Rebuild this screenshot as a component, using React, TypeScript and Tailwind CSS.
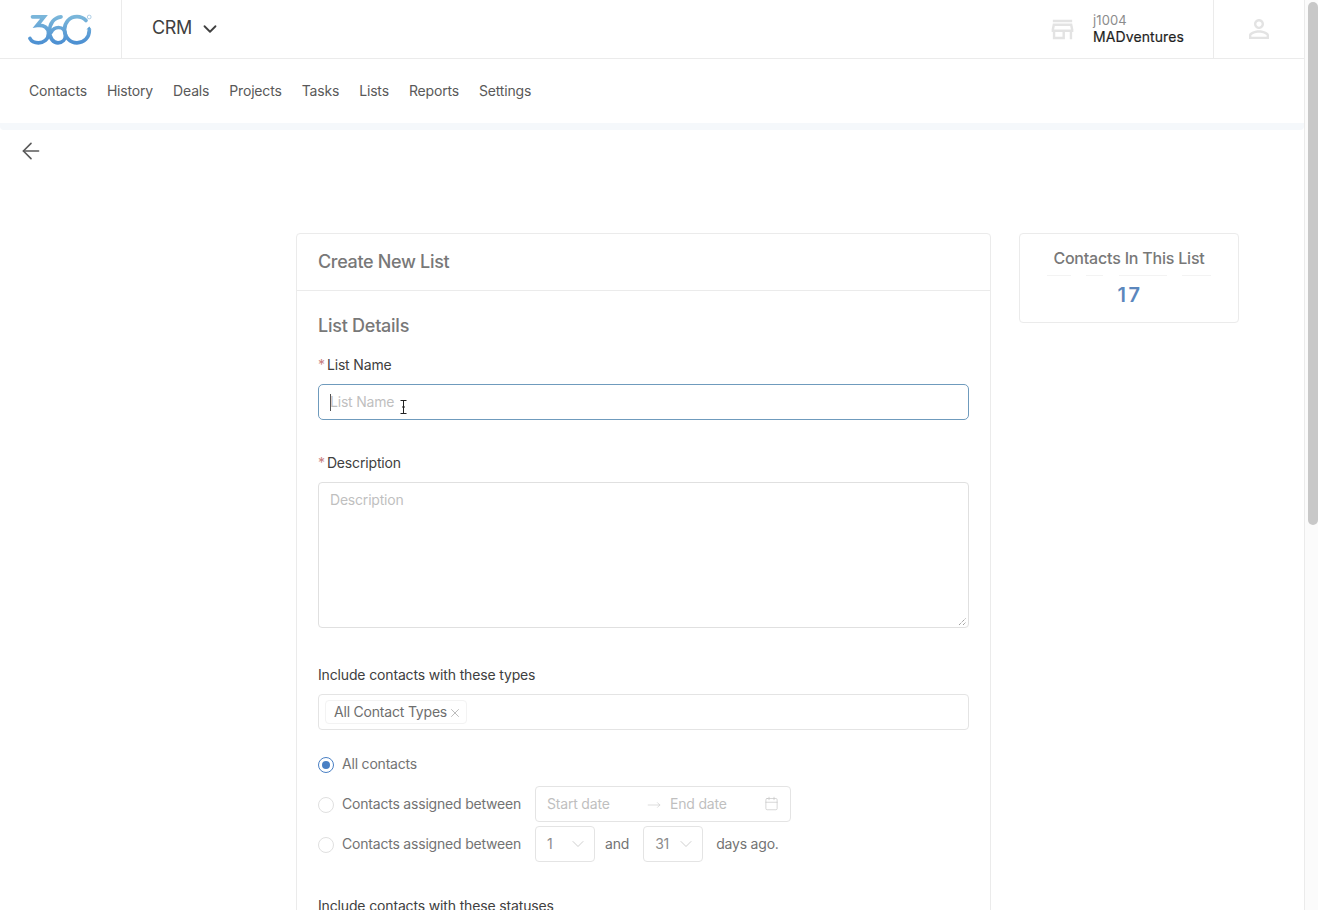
import React from "react";
import { ArrowLeft, ChevronDown, Calendar, X, MoveRight } from "lucide-react";

const navItems = ["Contacts", "History", "Deals", "Projects", "Tasks", "Lists", "Reports", "Settings"];

function Logo() {
  return (
    <svg width="64" height="31" viewBox="0 0 64 31" fill="none">
      <defs>
        <linearGradient id="g" x1="0" y1="0" x2="0" y2="1">
          <stop offset="0" stopColor="#7ab6da" />
          <stop offset="1" stopColor="#4d90d2" />
        </linearGradient>
      </defs>
      <g stroke="url(#g)" strokeWidth="3.7" strokeLinecap="round" fill="none">
        <path d="M4.5 2.8 H16 L9 11.5 C16 10.5 20.5 14 20.5 19.5 C20.5 25.5 15.5 28.8 10.5 28.8 C6.5 28.8 3.5 27.5 2 24.5" />
        <path d="M33 2.8 C26 3.5 21.5 9.5 21.5 17.5 C21.5 24.5 25.5 28.8 30 28.8 C34.5 28.8 37.5 25.5 37.5 21 C37.5 16.5 34.5 13.5 30.5 13.5 C27 13.5 24.5 15.5 23 18.5" />
        <path d="M58 6.5 C55.5 3.8 52.5 2.6 49 2.6 C41.5 2.6 36.5 8.5 36.5 15.5 C36.5 23 42 28.8 49 28.8 C56 28.8 61.3 23.5 61.3 16.5" />
      </g>
      <path d="M58.5 15.5 L61.3 12.5 L63.5 15.5 Z" fill="#5b9fd4" />
      <circle cx="61.2" cy="3" r="1.9" stroke="#8fbcdc" strokeWidth="0.7" />
    </svg>
  );
}

function StoreIcon() {
  return (
    <svg width="29" height="29" viewBox="0 0 24 24" fill="#e3e3e3">
      <path d="M18.36 9l.6 3H5.04l.6-3h12.72M20 4H4v2h16V4zm0 3H4l-1 5v2h1v6h10v-6h4v6h2v-6h1v-2l-1-5zM6 18v-4h6v4H6z" />
    </svg>
  );
}

function UserIcon() {
  return (
    <svg width="30" height="30" viewBox="0 0 24 24" fill="#e3e3e3">
      <path d="M12 5.9c1.16 0 2.1.94 2.1 2.1s-.94 2.1-2.1 2.1S9.9 9.16 9.9 8s.94-2.1 2.1-2.1m0 9c2.97 0 6.1 1.46 6.1 2.1v1.1H5.9V17c0-.64 3.13-2.1 6.1-2.1M12 4C9.79 4 8 5.79 8 8s1.79 4 4 4 4-1.79 4-4-1.79-4-4-4zm0 9c-2.67 0-8 1.34-8 4v3h16v-3c0-2.66-5.33-4-8-4z" />
    </svg>
  );
}

function Label({ children, required }: { children: React.ReactNode; required?: boolean }) {
  return (
    <div className="text-[14px] leading-[22px] tracking-[-0.15px] text-[#404040]">
      {required && <span className="mr-[2px] text-[#c98080]">*</span>}
      {children}
    </div>
  );
}

function Radio({ checked }: { checked?: boolean }) {
  return (
    <span
      className={`flex h-4 w-4 shrink-0 items-center justify-center rounded-full border bg-white ${
        checked ? "border-[#4a80c4]" : "border-[#e0e0e0]"
      }`}
    >
      {checked && <span className="h-2 w-2 rounded-full bg-[#4a80c4]" />}
    </span>
  );
}

function MiniSelect({ value }: { value: string }) {
  return (
    <div className="flex h-9 w-[60px] items-center justify-between rounded-[4px] border border-[#e4e4e4] pb-[1px] pl-[11px] pr-[6px] text-[14px] text-[#8c8c8c]">
      <span>{value}</span>
      <ChevronDown size={20} strokeWidth={0.9} className="text-[#bfbfbf]" />
    </div>
  );
}

export default function App() {
  return (
    <div className="flex h-[910px] w-[1318px] overflow-hidden bg-white font-['Inter',sans-serif]">
      <div className="h-full w-[1305px] shrink-0 border-r border-[#ebebeb]">
        <header className="flex h-[59px] items-center border-b border-[#ebebeb]">
          <div className="flex h-full w-[122px] shrink-0 items-center border-r border-[#ebebeb] pl-[28px]">
            <Logo />
          </div>
          <div className="ml-[30px] flex items-center pb-[3px] text-[18px] tracking-[-0.4px] text-[#404040]">
            CRM
            <ChevronDown size={22} strokeWidth={2} className="ml-[7px] mt-[3px]" />
          </div>
          <div className="ml-auto flex h-full items-center">
            <StoreIcon />
            <div className="ml-[16px] mr-[29px]">
              <div className="text-[13px] leading-[15px] tracking-[0.1px] text-[#8c8c8c]">j1004</div>
              <div className="text-[14px] font-normal leading-[17px] tracking-[0.1px] text-[#1f1f1f] [-webkit-text-stroke:0.2px_#1f1f1f]">MADventures</div>
            </div>
            <div className="flex h-full w-[91px] items-center justify-center border-l border-[#ebebeb]">
              <UserIcon />
            </div>
          </div>
        </header>
        <nav className="flex h-[64px] items-center gap-[20px] pb-[2px] pl-[29px] text-[14px] tracking-[-0.17px] text-[#595959]">
          {navItems.map((n) => (
            <span key={n}>{n}</span>
          ))}
        </nav>
        <div className="h-[7px] rounded-b-[4px] bg-[#f5f8fb]" />
        <div className="h-[103px] pl-[18px] pt-[8px]">
          <ArrowLeft size={26} strokeWidth={1.5} className="text-[#595959]" />
        </div>
        <div className="ml-[296px] flex items-start gap-[28px]">
          <section className="w-[695px] shrink-0 rounded-t-[4px] border border-[#ebebeb]">
            <div className="flex h-[57px] items-center border-b border-[#ebebeb] pb-[2px] pl-[21px] text-[18px] font-medium tracking-[-0.33px] text-[#787878]">
              Create New List
            </div>
            <div className="px-[21px] pt-[23px]">
              <div className="text-[18px] font-medium leading-[24px] tracking-[-0.25px] text-[#787878]">List Details</div>
              <div className="mt-[16px]">
                <Label required>List Name</Label>
              </div>
              <div className="relative mt-[8px] flex h-9 items-center rounded-[5px] border border-[#6f9bbd] pb-[1px] pl-[11px] text-[14px] tracking-[-0.2px] text-[#bfbfbf]">
                <span className="absolute left-[11px] top-[9px] h-[17px] w-px bg-[#555]" />
                List Name
                <svg className="absolute left-[81px] top-[15px]" width="7" height="14" viewBox="0 0 7 14" stroke="#222" strokeWidth="1" fill="none">
                  <path d="M0.5 0.5 H6.5 M3.5 0.5 V13.5 M0.5 13.5 H6.5 M2 7 H5" />
                </svg>
              </div>
              <div className="mt-[32px]">
                <Label required>Description</Label>
              </div>
              <div className="relative mt-[8px] h-[146px] rounded-[4px] border border-[#e0e0e0] px-[11px] pt-[6px] text-[14px] leading-[22px] tracking-[-0.2px] text-[#bfbfbf]">
                Description
                <svg className="absolute bottom-px right-px" width="9" height="9" viewBox="0 0 9 9" stroke="#777" strokeWidth="1" strokeDasharray="1 1">
                  <path d="M1 8 L8 1 M5 8 L8 5" />
                </svg>
              </div>
              <div className="mt-[36px]">
                <Label>Include contacts with these types</Label>
              </div>
              <div className="mt-[8px] flex h-9 items-center rounded-[4px] border border-[#e4e4e4] pl-[6px]">
                <div className="flex h-6 items-center rounded-[4px] border border-[#f3f3f3] pb-[1px] pl-[8px] pr-[4px] text-[14px] tracking-[-0.2px] text-[#6e6e6e]">
                  All Contact Types
                  <X size={14} strokeWidth={1} className="ml-[1px] mt-[2px] text-[#8c8c8c]" />
                </div>
              </div>
              <div className="mt-[23px] flex h-[22px] items-center gap-[8px] text-[14px] tracking-[-0.2px] text-[#737373]">
                <span className="mt-[2px]"><Radio checked /></span>
                <span className="mb-[2px]">All contacts</span>
              </div>
              <div className="mt-[11px] flex h-9 items-center gap-[8px] text-[14px] tracking-[-0.2px] text-[#737373]">
                <span className="mt-[2px]"><Radio /></span>
                <span className="mb-[2px]">Contacts assigned between</span>
                <div className="ml-[6px] flex h-9 w-[256px] items-center rounded-[4px] border border-[#e4e4e4] pb-[2px] pl-[11px] pr-[11px] text-[#bfbfbf]">
                  <span className="w-[100px]">Start date</span>
                  <MoveRight size={14} strokeWidth={1} className="mt-[3px] text-[#c4c4c4]" />
                  <span className="ml-[9px]">End date</span>
                  <Calendar size={15} strokeWidth={1} className="ml-auto mt-[1px] text-[#bfbfbf]" />
                </div>
              </div>
              <div className="mt-[4px] flex h-9 items-center text-[14px] tracking-[-0.2px] text-[#737373]">
                <span className="mt-[2px]"><Radio /></span>
                <span className="mb-[2px] ml-[8px]">Contacts assigned between</span>
                <div className="ml-[14px]"><MiniSelect value="1" /></div>
                <span className="mb-[2px] ml-[10px] mr-[14px]">and</span>
                <MiniSelect value="31" />
                <span className="mb-[2px] ml-[13px]">days ago.</span>
              </div>
              <div className="mt-[33px]">
                <Label>Include contacts with these statuses</Label>
              </div>
            </div>
          </section>
          <aside className="flex h-[90px] w-[220px] shrink-0 flex-col items-center rounded-[4px] border border-[#ebebeb]">
            <div className="mt-[13px] text-[16px] font-medium leading-[22px] tracking-[-0.2px] text-[#787878]">Contacts In This List</div>
            <div className="mt-[6px] flex h-px w-[165px] justify-between">
              <span className="h-px w-[24px] bg-[#f3f3f3]" />
              <span className="h-px w-[17px] bg-[#f3f3f3]" />
              <span className="h-px w-[48px] bg-[#f3f3f3]" />
              <span className="h-px w-[29px] bg-[#f3f3f3]" />
            </div>
            <div className="ml-[2px] mt-[7px] text-[20px] font-semibold leading-[24px] tracking-[2.5px] text-[#5b87bd]">17</div>
          </aside>
        </div>
      </div>
      <div className="h-full flex-1 bg-[#fbfbfb] pl-[3px] pr-[1px] pt-[2px]">
        <div className="h-[523px] w-[10px] rounded-[5px] bg-[#c8c8c8]" />
      </div>
    </div>
  );
}
